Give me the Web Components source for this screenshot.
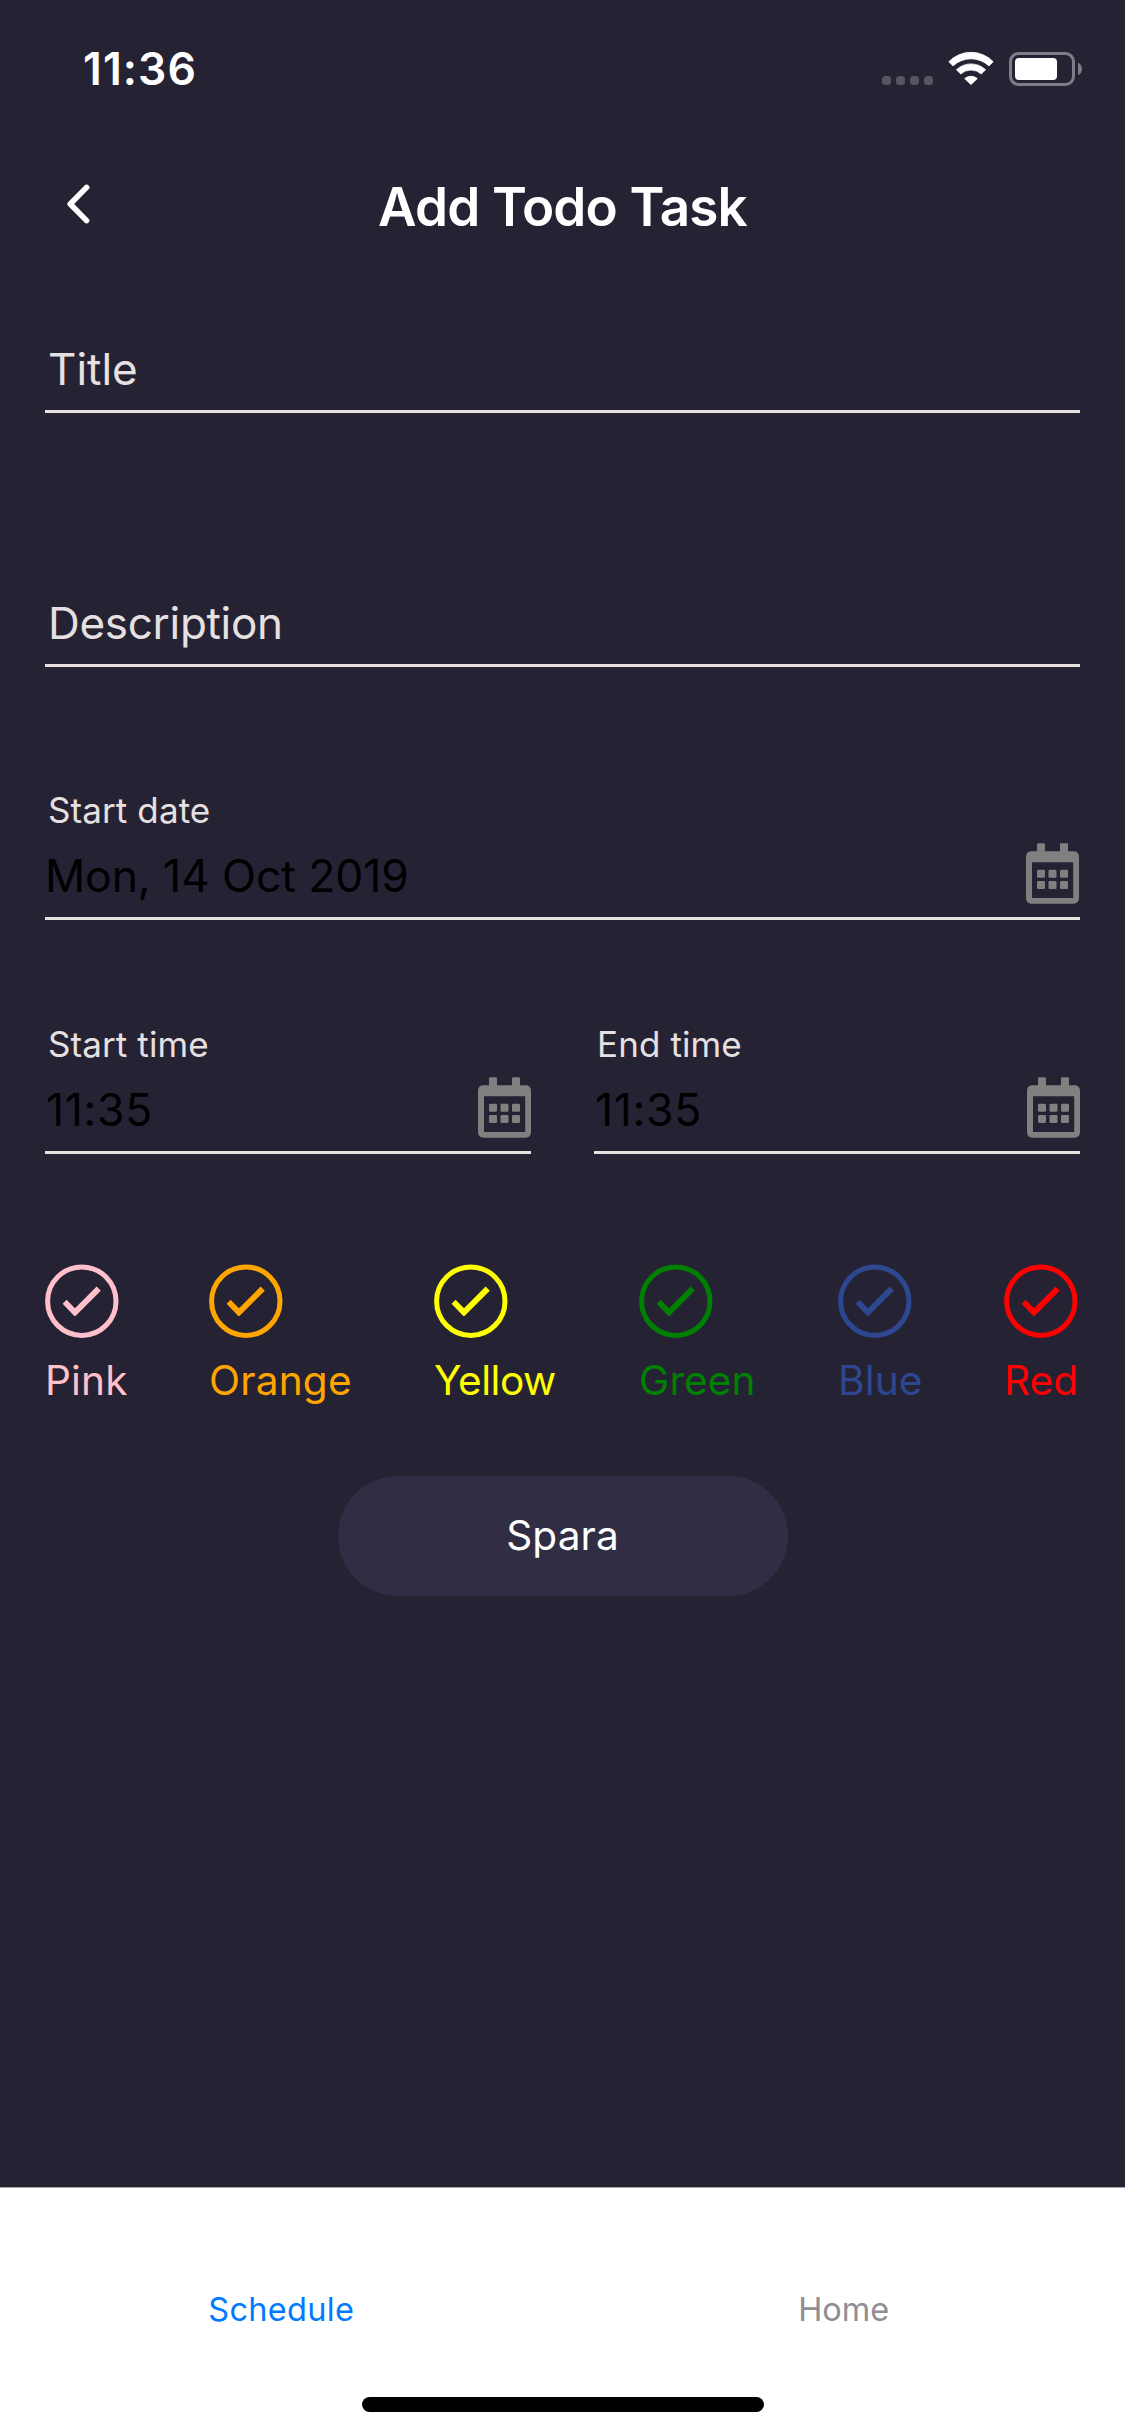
<!DOCTYPE html>
<html lang="sv">
<head>
<meta charset="utf-8">
<title>Add Todo Task</title>
<style>
html, body { margin: 0; height: 100%; background: #252234; }
body { font-family: Inter, "Liberation Sans", sans-serif; color: #fff; -webkit-font-smoothing: antialiased; }
</style>
</head>
<body>
<todo-screen></todo-screen>
<script>
const define = (name, html) => {
  const template = document.createElement('template');
  template.innerHTML = html;
  customElements.define(name, class extends HTMLElement {
    constructor() {
      super();
      this.attachShadow({ mode: 'open' }).append(template.content.cloneNode(true));
    }
  });
};

define('status-bar', `
<style>
:host { display: flex; align-items: center; justify-content: space-between; height: 138px; padding: 0 43px 0 83px; box-sizing: border-box; }
.time { font-size: 44.5px; font-weight: 600; line-height: 54px; letter-spacing: 1.1px; }
.icons { display: flex; align-items: center; gap: 15px; }
svg { display: block; }
</style>
<span class="time"><slot></slot></span>
<div class="icons">
  <svg width="51" height="34" viewBox="0 0 51 34" fill="#575463">
    <rect x="0" y="24" width="9" height="9" rx="3.5"/><rect x="14" y="24" width="9" height="9" rx="3.5"/>
    <rect x="28" y="24" width="9" height="9" rx="3.5"/><rect x="42" y="24" width="9" height="9" rx="3.5"/>
  </svg>
  <svg width="46" height="34" viewBox="0 0 46 34" fill="#fff" stroke="#fff" stroke-width=".8" stroke-linejoin="round">
    <path d="M.8 9.7A31 31 0 0 1 45.2 9.7L41 13.9A26.4 26.4 0 0 0 5 13.9Z"/>
    <path d="M8.4 17.8A21 21 0 0 1 37.6 17.8L33.2 22A15 15 0 0 0 12.8 22Z"/>
    <path d="M16.7 26.6A9.6 9.6 0 0 1 29.3 26.6L23 32.6Z"/>
  </svg>
  <svg width="73" height="34" viewBox="0 0 73 34">
    <rect x="1.5" y="1.5" width="63" height="31" rx="8" fill="none" stroke="#7f7c89" stroke-width="3"/>
    <rect x="6" y="6" width="42" height="22" rx="4" fill="#fff"/>
    <path d="M69 10.8C74.3 13 74.3 21 69 23.2Z" fill="#7f7c89"/>
  </svg>
</div>`);

define('nav-header', `
<style>
:host { display: flex; align-items: center; height: 138px; }
.back, .end { width: 160px; box-sizing: border-box; }
.back { padding: 0 0 6px 66px; }
h1 { flex: 1; margin: 0; text-align: center; font-size: 53px; line-height: 64px; font-weight: 600; letter-spacing: -.85px; }
svg { display: block; }
</style>
<div class="back"><svg width="25" height="40" viewBox="0 0 25 40" fill="none" stroke="#fff" stroke-width="5.6" stroke-linecap="round" stroke-linejoin="round"><path d="M20.6 3.4L4.2 20L20.6 36.6"/></svg></div>
<h1><slot></slot></h1>
<div class="end"></div>`);

define('text-field', `
<style>
:host { display: block; box-sizing: border-box; height: 66px; padding: 0 0 19px 3px; border-bottom: 3px solid #e6e0e0; color: #e6e0e0; font-size: 44px; line-height: 44px; letter-spacing: var(--track, 0); }
</style>
<slot></slot>`);

define('calendar-icon', `
<style>:host { display: block; } svg { display: block; }</style>
<svg width="53" height="61" viewBox="0 0 53 61" fill="#808080">
  <path fill-rule="evenodd" d="M11 9V1.5Q11 .3 12.2 .3H17.8Q19 .3 19 1.5V8.3H34V1.5Q34 .3 35.2 .3H40.8Q42 .3 42 1.5V8.3H47.3Q53 8.3 53 14V55Q53 60.7 47.3 60.7H5.7Q0 60.7 0 55V14Q0 8.3 5.7 8.3H11ZM6 19.3V55H47.2V19.3Z"/>
  <rect x="11" y="26.7" width="8" height="8" rx="1.3"/><rect x="22.5" y="26.7" width="8" height="8" rx="1.3"/><rect x="34" y="26.7" width="8" height="8" rx="1.3"/>
  <rect x="11" y="38" width="8" height="8" rx="1.3"/><rect x="22.5" y="38" width="8" height="8" rx="1.3"/><rect x="34" y="38" width="8" height="8" rx="1.3"/>
</svg>`);

define('date-field', `
<style>
:host { display: flex; flex-direction: column; gap: 15px; box-sizing: border-box; height: 128px; border-bottom: 3px solid #e6e2e0; }
.label { color: #e6e0e0; font-size: 35px; line-height: 36px; padding-left: 3px; letter-spacing: .1px; }
.row { display: flex; align-items: flex-end; justify-content: space-between; height: 74px; }
.value { color: #000; font-size: 44.5px; line-height: 44px; padding: 0 0 19px var(--indent, 0); letter-spacing: var(--track, 0); }
calendar-icon { margin: 0 var(--icon-inset, 0) 13px 0; }
</style>
<div class="label"><slot name="label"></slot></div>
<div class="row"><span class="value"><slot></slot></span><calendar-icon></calendar-icon></div>`);

define('color-option', `
<style>
:host { display: flex; flex-direction: column; gap: 21px; height: 138px; }
svg { display: block; flex: none; }
span { flex: none; font-size: 40.6px; line-height: 44px; letter-spacing: var(--track, 0); white-space: nowrap; }
</style>
<svg width="74" height="74" viewBox="0 0 74 74">
  <circle cx="36.8" cy="37.2" r="34.2" fill="none" stroke="currentColor" stroke-width="5"/>
  <path fill="currentColor" d="M17.6 39.8L21.6 35.8L30 44.3L51.6 22.6L55.8 26.7L31 51.4Q29.9 52.4 28.8 51.4Z"/>
</svg>
<span><slot></slot></span>`);

define('pill-button', `
<style>
:host { display: flex; align-items: center; justify-content: center; box-sizing: border-box; width: 450px; height: 120px; padding-bottom: 1px; border-radius: 60px; background: #302d45; color: #fff; font-size: 40.6px; line-height: 50px; letter-spacing: .1px; }
</style>
<slot></slot>`);

define('tab-bar', `
<style>
:host { display: flex; flex-direction: column; align-items: center; box-sizing: border-box; height: 249px; padding-bottom: 24px; justify-content: space-between; background: #fff; border-top: 1px solid #a7a7aa; }
.tabs { display: flex; width: 100%; padding-top: 102px; }
.home-indicator { width: 402px; height: 15px; border-radius: 8px; background: #000; }
::slotted(*) { flex: 1; text-align: center; font-size: 32.5px; line-height: 40px; color: #8e8e93; }
::slotted([aria-current]) { color: #007aff; letter-spacing: .3px; }
</style>
<div class="tabs"><slot></slot></div>
<div class="home-indicator"></div>`);

define('todo-screen', `
<style>
:host { display: flex; flex-direction: column; width: 1125px; height: 2436px; background: #252234; overflow: hidden; }
main { flex: 1; display: flex; flex-direction: column; padding: 71px 45px 0; }
.description { margin-top: 188px; --track: -.3px; }
.date { margin-top: 125px; --track: -.1px; --icon-inset: 1px; }
.times { display: grid; grid-template-columns: 1fr 1fr; gap: 63px; margin-top: 106px; --track: .7px; --indent: 1px; }
.colors { display: grid; grid-template-columns: 164px 225px 205px 199px 166px 76px; margin-top: 110px; }
pill-button { margin-top: 74px; align-self: center; }
</style>
<status-bar>11:36</status-bar>
<nav-header>Add Todo Task</nav-header>
<main>
  <text-field>Title</text-field>
  <text-field class="description">Description</text-field>
  <date-field class="date"><span slot="label">Start date</span>Mon, 14 Oct 2019</date-field>
  <div class="times">
    <date-field><span slot="label">Start time</span>11:35</date-field>
    <date-field><span slot="label">End time</span>11:35</date-field>
  </div>
  <div class="colors">
    <color-option style="color:pink;--track:.15px">Pink</color-option>
    <color-option style="color:orange;--track:.2px">Orange</color-option>
    <color-option style="color:yellow;--track:-.45px">Yellow</color-option>
    <color-option style="color:green;--track:.1px">Green</color-option>
    <color-option style="color:#2e4791;--track:.15px">Blue</color-option>
    <color-option style="color:red">Red</color-option>
  </div>
  <pill-button>Spara</pill-button>
</main>
<tab-bar><span aria-current="page">Schedule</span><span>Home</span></tab-bar>`);
</script>
</body>
</html>
